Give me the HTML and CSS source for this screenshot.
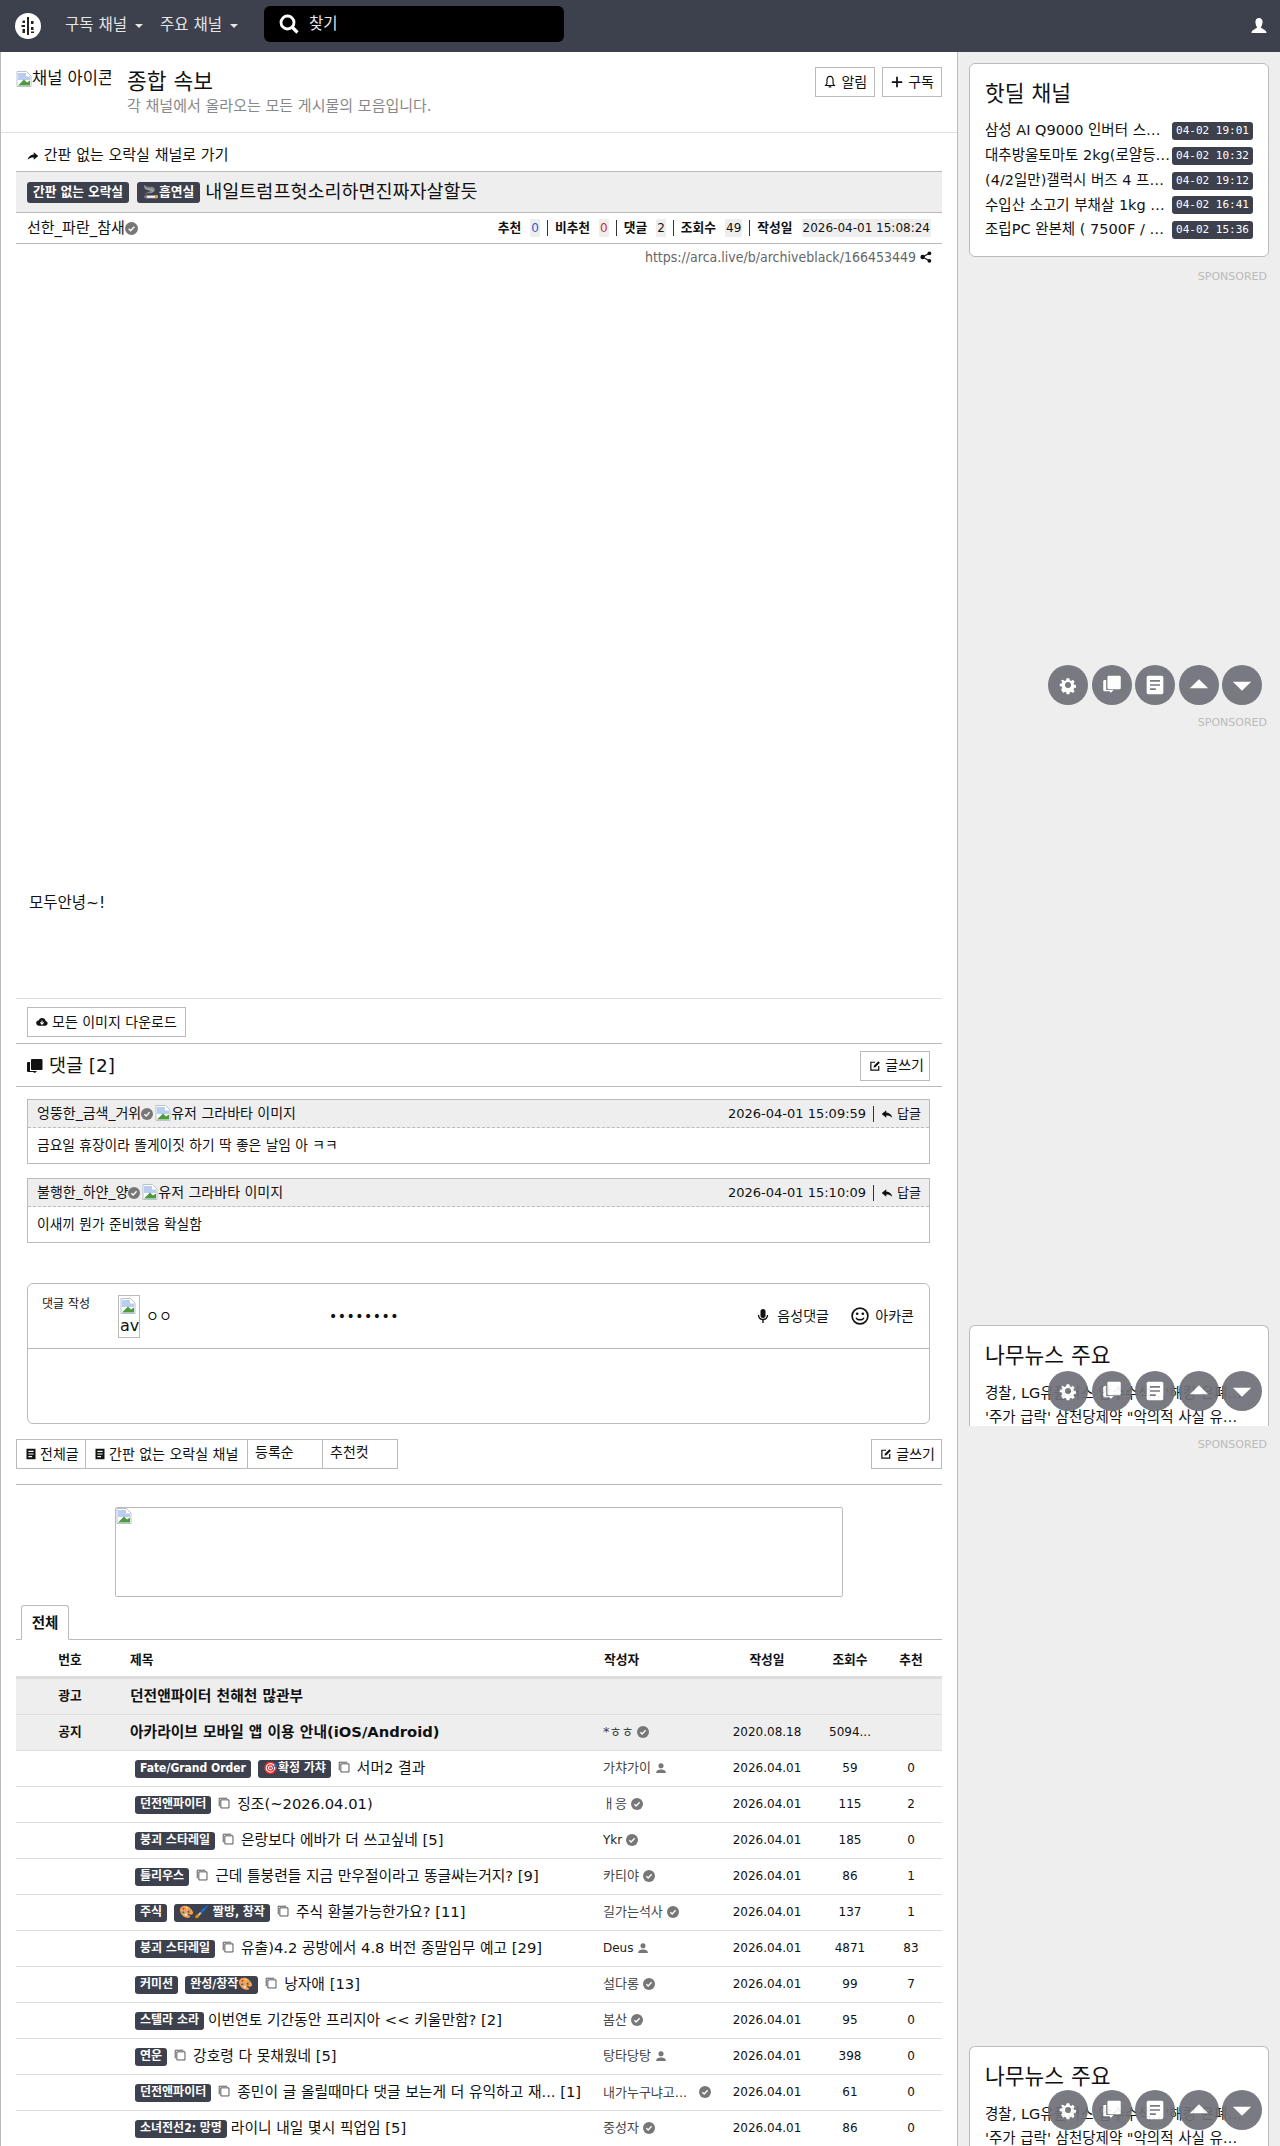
FILE: index.html
```html
<!DOCTYPE html>
<html lang="ko">
<head>
  <meta charset="UTF-8">
  <title>내일트럼프헛소리하면진짜자살할듯</title>
  <link rel="stylesheet" href="styles.css">
</head>
<body>
  <svg class="sprites" width="0" height="0">
    <symbol id="i-check" viewBox="0 0 16 16"><circle cx="8" cy="8" r="8" fill="#777"/><path d="M4.5 8.3l2.4 2.4 4.6-5" fill="none" stroke="#fff" stroke-width="1.8"/></symbol>
    <symbol id="i-person" viewBox="0 0 16 16"><circle cx="8" cy="5" r="3.4" fill="#777"/><path d="M1.5 14.5c0-3.4 3-4.6 6.500-4.600s6.500 1.200 6.500 4.600z" fill="#777"/></symbol>
    <symbol id="i-photos" viewBox="0 0 16 16"><path d="M3.500 3.500h10v10h-10z" fill="none" stroke="#333" stroke-width="1"/><path d="M1.500 11.500v-10h10" fill="none" stroke="#333" stroke-width="1"/></symbol>
    <symbol id="i-doc" viewBox="0 0 16 16"><path d="M2 1h12v14H2z" fill="#111"/><path d="M4.500 4.500h7M4.500 8h7M4.500 11.500h5" stroke="#fff" stroke-width="1.500"/></symbol>
    <symbol id="i-edit" viewBox="0 0 16 16"><path d="M8 3H2.500v10.500H13V8" fill="none" stroke="#111" stroke-width="1.600"/><path d="M6 10l.5-2.500L12.500 1.500l2 2-6 6z" fill="#111"/></symbol>
    <symbol id="i-reply" viewBox="0 0 16 16"><path d="M7 3L1 8l6 5V10c3.500 0 6 .8 8 3-.5-4-3.500-6.500-8-7z" fill="#111"/></symbol>
    <symbol id="i-broken" viewBox="0 0 16 16"><path d="M1 .5h9.500l4.500 4.500v10.500H1z" fill="#fff" stroke="#b9c3cf"/><path d="M2 2h8v3.500h4V9H2z" fill="#b8cdf0"/><path d="M2 14.500l6-6 3 3 3-2v5z" fill="#4a9c3f"/></symbol>
    <symbol id="f-gear" viewBox="0 0 24 24"><path d="M10 2h4l.6 3 2 .9 2.600-1.700 2.800 2.800-1.700 2.600.9 2 2.800.4v4l-2.800.6-.9 2 1.700 2.600-2.800 2.800-2.600-1.700-2 .9-.6 2.800h-4l-.6-2.800-2-.9-2.600 1.700L1.600 19l1.700-2.600-.9-2L-.4 14v-4l2.800-.4.9-2L1.600 5 4.400 4.200 7 5.900l2-.9z" transform="translate(2.400 2.400) scale(.8)" fill="#fff"/><circle cx="12" cy="12" r="3.600" fill="#6f7078"/></symbol>
    <symbol id="f-chat" viewBox="0 0 24 24"><path d="M8 1h13a1.500 1.500 0 0 1 1.500 1.500v13a1.500 1.500 0 0 1-1.500 1.500H8a1.500 1.500 0 0 1-1.500-1.500v-13A1.500 1.500 0 0 1 8 1z" fill="#fff"/><path d="M5 6v12h9l-3 3h-1l-1-1.500H3a1.500 1.500 0 0 1-1.500-1.500V7.500A1.500 1.500 0 0 1 3 6z" fill="#fff"/></symbol>
    <symbol id="f-doc" viewBox="0 0 24 24"><rect x="2" y="1" width="20" height="22" rx="2" fill="#fff"/><path d="M6 7h12M6 12h12M6 17h7" stroke="#6f7078" stroke-width="2"/></symbol>
    <symbol id="f-up" viewBox="0 0 24 24"><path d="M12 5l11 11H1z" fill="#fff"/></symbol>
    <symbol id="f-down" viewBox="0 0 24 24"><path d="M12 19L1 8h22z" fill="#fff"/></symbol>
  </svg>

  <nav class="navbar">
    <svg class="logo" viewBox="0 0 26 26"><circle cx="13" cy="13" r="13" fill="#fff"/><path d="M12 4h2v18h-2zM16 8h2.500v3H16zM16 14h2.500v3H16zM7.500 7.500H10v2.500H7.500zM6.500 12H10v2H6.500zM7.500 16H10v4H7.500zM19 20h-3v-1.500h3z" fill="#222"/></svg>
    <a class="nav-link">구독 채널<i class="caret"></i></a>
    <a class="nav-link">주요 채널<i class="caret"></i></a>
    <div class="search">
      <svg class="search-icon" viewBox="0 0 20 20"><circle cx="8.500" cy="8.500" r="6.500" fill="none" stroke="#fff" stroke-width="2.800"/><path d="M13 13l5.500 5.500" stroke="#fff" stroke-width="3.200"/></svg>
      <span>찾기</span>
    </div>
    <svg class="nav-user" viewBox="0 0 16 16"><path d="M8 0c2.400 0 3.600 1.800 3.600 4S10.500 8 10 9.500c0 1.200 5.500 2 5.500 5.500H.5c0-3.500 5.500-4.300 5.500-5.500C5.500 8 4.400 6.200 4.400 4S5.600 0 8 0z" fill="#fff"/></svg>
  </nav>

  <div class="wrap">
    <main class="content">
      <div class="channel-head">
        <span class="channel-icon"><svg class="broken-img"><use href="#i-broken"/></svg>채널 아이콘</span>
        <div class="channel-text">
          <h2>종합 속보</h2>
          <p>각 채널에서 올라오는 모든 게시물의 모음입니다.</p>
        </div>
        <div class="channel-btns">
          <a class="btn">
            <svg class="ico" viewBox="0 0 16 16"><path d="M8 1.500c-2.500 0-3.500 2-3.500 4.500v4L3 12h10l-1.500-2V6c0-2.500-1-4.500-3.500-4.500zM6.500 13.500h3" fill="none" stroke="#111" stroke-width="1.300"/></svg>
            알림</a>
          <a class="btn">
            <svg class="ico" viewBox="0 0 16 16"><path d="M8 2v12M2 8h12" stroke="#111" stroke-width="2"/></svg>
            구독</a>
        </div>
      </div>

      <a class="back-link">
        <svg class="ico-sm flip" viewBox="0 0 16 16"><use href="#i-reply"/></svg>
        간판 없는 오락실 채널로 가기</a>

      <div class="article-title">
        <span class="badge">간판 없는 오락실</span>
        <span class="badge">🚬흡연실</span>
        <span>내일트럼프헛소리하면진짜자살할듯</span>
      </div>
      <div class="article-info">
        <span class="author">선한_파란_참새<svg class="ico-sm"><use href="#i-check"/></svg></span>
        <div class="stats">
          <b>추천</b><span class="val blue">0</span><i></i>
          <b>비추천</b><span class="val red">0</span><i></i>
          <b>댓글</b><span class="val">2</span><i></i>
          <b>조회수</b><span class="val">49</span><i></i>
          <b>작성일</b><span class="val">2026-04-01 15:08:24</span>
        </div>
      </div>
      <div class="article-url">
        https://arca.live/b/archiveblack/166453449
        <svg class="ico-sm" viewBox="0 0 16 16"><circle cx="3.500" cy="8" r="3" fill="#111"/><circle cx="12.500" cy="3" r="2.500" fill="#111"/><circle cx="12.500" cy="13" r="2.500" fill="#111"/><path d="M3.500 8l9-5M3.500 8l9 5" stroke="#111" stroke-width="1.600"/></svg>
      </div>

      <div class="article-body">
        <div class="article-img"></div>
        <p>모두안녕~!</p>
      </div>

      <div class="download-row">
        <a class="btn">
          <svg class="ico-sm" viewBox="0 0 16 16"><path d="M4 13a3.500 3.500 0 0 1-.5-7A5 5 0 0 1 13 6.500 3.300 3.300 0 0 1 12.500 13z" fill="#111"/><path d="M8 6v4.500M5.800 8.500L8 11l2.200-2.500" fill="none" stroke="#fff" stroke-width="1.400"/></svg>
          모든 이미지 다운로드</a>
      </div>

      <div class="comment-head">
        <h3>
          <svg class="ico-chat" viewBox="0 0 16 16"><path d="M5 1h9.500a1 1 0 0 1 1 1v9a1 1 0 0 1-1 1H5a1 1 0 0 1-1-1V2a1 1 0 0 1 1-1z" fill="#111"/><path d="M3 4v9h7l-2 2-2-1H1a1 1 0 0 1-1-1V5a1 1 0 0 1 1-1z" fill="#111"/></svg>
          댓글 [2]</h3>
        <a class="btn">
          <svg class="ico-sm"><use href="#i-edit"/></svg>
          글쓰기</a>
      </div>

      <div class="comment">
        <div class="comment-top">
          <span class="comment-user">엉뚱한_금색_거위<svg class="ico-sm"><use href="#i-check"/></svg><svg class="broken-img"><use href="#i-broken"/></svg>유저 그라바타 이미지</span>
          <span class="comment-date">2026-04-01 15:09:59<i></i><svg class="ico-sm"><use href="#i-reply"/></svg>답글</span>
        </div>
        <div class="comment-text">금요일 휴장이라 똘게이짓 하기 딱 좋은 날임 아 ㅋㅋ</div>
      </div>
      <div class="comment">
        <div class="comment-top">
          <span class="comment-user">불행한_하얀_양<svg class="ico-sm"><use href="#i-check"/></svg><svg class="broken-img"><use href="#i-broken"/></svg>유저 그라바타 이미지</span>
          <span class="comment-date">2026-04-01 15:10:09<i></i><svg class="ico-sm"><use href="#i-reply"/></svg>답글</span>
        </div>
        <div class="comment-text">이새끼 뭔가 준비했음 확실함</div>
      </div>

      <form class="reply-form">
        <div class="reply-top">
          <span class="reply-label">댓글 작성</span>
          <span class="reply-avatar"><svg class="broken-img"><use href="#i-broken"/></svg>av</span>
          <span class="reply-nick">ㅇㅇ</span>
          <span class="reply-pass">••••••••</span>
          <a class="reply-tool">
            <svg class="ico" viewBox="0 0 16 16"><rect x="5.500" y="1" width="5" height="9" rx="2.500" fill="#111"/><path d="M3.500 7c0 3 2 4.500 4.500 4.500S12.500 10 12.500 7M8 11.500V15" fill="none" stroke="#111" stroke-width="1.400"/></svg>
            음성댓글</a>
          <a class="reply-tool">
            <svg class="ico-lg" viewBox="0 0 16 16"><circle cx="8" cy="8" r="7" fill="none" stroke="#111" stroke-width="1.500"/><circle cx="5.500" cy="6" r="1.200" fill="#111"/><circle cx="10.500" cy="6" r="1.200" fill="#111"/><path d="M4.500 9.500c1 2.500 6 2.500 7 0" fill="none" stroke="#111" stroke-width="1.300"/></svg>
            아카콘</a>
        </div>
        <div class="reply-area"></div>
      </form>

      <div class="list-tools">
        <div class="btn-group">
          <a class="btn btn-all"><svg class="ico-sm"><use href="#i-doc"/></svg>전체글</a>
          <a class="btn btn-channel"><svg class="ico-sm"><use href="#i-doc"/></svg>간판 없는 오락실 채널</a>
          <a class="btn btn-sel">등록순</a>
          <a class="btn btn-sel">추천컷</a>
        </div>
        <a class="btn">
          <svg class="ico-sm"><use href="#i-edit"/></svg>
          글쓰기</a>
      </div>

      <div class="banner"><svg class="broken-img"><use href="#i-broken"/></svg></div>

      <div class="tabs"><a class="tab">전체</a></div>

      <table class="list">
        <colgroup>
          <col class="c-no"><col class="c-title"><col class="c-author"><col class="c-date"><col class="c-view"><col class="c-rate">
        </colgroup>
        <thead>
          <tr><th>번호</th><th class="left">제목</th><th class="left">작성자</th><th>작성일</th><th>조회수</th><th>추천</th></tr>
        </thead>
        <tbody>
          <tr class="notice"><td><b>광고</b></td><td class="title"><b>던전앤파이터 천해천 많관부</b></td><td></td><td></td><td></td><td></td></tr>
          <tr class="notice"><td><b>공지</b></td><td class="title"><b>아카라이브 모바일 앱 이용 안내(iOS/Android)</b></td><td class="who">*ㅎㅎ<svg class="ico-sm"><use href="#i-check"/></svg></td><td>2020.08.18</td><td>5094...</td><td></td></tr>
          <tr><td></td><td class="title"><span class="badge">Fate/Grand Order</span><span class="badge">🎯확정 가챠</span><svg class="ico-ph"><use href="#i-photos"/></svg>서머2 결과</td><td class="who">가챠가이<svg class="ico-sm"><use href="#i-person"/></svg></td><td>2026.04.01</td><td>59</td><td>0</td></tr>
          <tr><td></td><td class="title"><span class="badge">던전앤파이터</span><svg class="ico-ph"><use href="#i-photos"/></svg>징조(~2026.04.01)</td><td class="who">ㅐ응<svg class="ico-sm"><use href="#i-check"/></svg></td><td>2026.04.01</td><td>115</td><td>2</td></tr>
          <tr><td></td><td class="title"><span class="badge">붕괴 스타레일</span><svg class="ico-ph"><use href="#i-photos"/></svg>은랑보다 에바가 더 쓰고싶네 [5]</td><td class="who latin">Ykr<svg class="ico-sm"><use href="#i-check"/></svg></td><td>2026.04.01</td><td>185</td><td>0</td></tr>
          <tr><td></td><td class="title"><span class="badge">틀리우스</span><svg class="ico-ph"><use href="#i-photos"/></svg>근데 틀붕련들 지금 만우절이라고 똥글싸는거지? [9]</td><td class="who">카티야<svg class="ico-sm"><use href="#i-check"/></svg></td><td>2026.04.01</td><td>86</td><td>1</td></tr>
          <tr><td></td><td class="title"><span class="badge">주식</span><span class="badge">🎨🖌️ 짤방, 창작</span><svg class="ico-ph"><use href="#i-photos"/></svg>주식 환불가능한가요? [11]</td><td class="who">길가는석사<svg class="ico-sm"><use href="#i-check"/></svg></td><td>2026.04.01</td><td>137</td><td>1</td></tr>
          <tr><td></td><td class="title"><span class="badge">붕괴 스타레일</span><svg class="ico-ph"><use href="#i-photos"/></svg>유출)4.2 공방에서 4.8 버전 종말임무 예고 [29]</td><td class="who latin">Deus<svg class="ico-sm"><use href="#i-person"/></svg></td><td>2026.04.01</td><td>4871</td><td>83</td></tr>
          <tr><td></td><td class="title"><span class="badge">커미션</span><span class="badge">완성/창작🎨</span><svg class="ico-ph"><use href="#i-photos"/></svg>낭자애 [13]</td><td class="who">설다롱<svg class="ico-sm"><use href="#i-check"/></svg></td><td>2026.04.01</td><td>99</td><td>7</td></tr>
          <tr><td></td><td class="title"><span class="badge tight">스텔라 소라</span>이번연토 기간동안 프리지아 &lt;&lt; 키울만함? [2]</td><td class="who">봄산<svg class="ico-sm"><use href="#i-check"/></svg></td><td>2026.04.01</td><td>95</td><td>0</td></tr>
          <tr><td></td><td class="title"><span class="badge">연운</span><svg class="ico-ph"><use href="#i-photos"/></svg>강호령 다 못채웠네 [5]</td><td class="who">탕타당탕<svg class="ico-sm"><use href="#i-person"/></svg></td><td>2026.04.01</td><td>398</td><td>0</td></tr>
          <tr><td></td><td class="title"><span class="badge">던전앤파이터</span><svg class="ico-ph"><use href="#i-photos"/></svg>종민이 글 올릴때마다 댓글 보는게 더 유익하고 재... [1]</td><td class="who"><span class="who-cut">내가누구냐고...</span><svg class="ico-sm"><use href="#i-check"/></svg></td><td>2026.04.01</td><td>61</td><td>0</td></tr>
          <tr><td></td><td class="title"><span class="badge tight">소녀전선2: 망명</span>라이니 내일 몇시 픽업임 [5]</td><td class="who">중성자<svg class="ico-sm"><use href="#i-check"/></svg></td><td>2026.04.01</td><td>86</td><td>0</td></tr>
        </tbody>
      </table>
    </main>

    <aside class="sidebar">
      <div class="card">
        <h5>핫딜 채널</h5>
        <ul class="deals">
          <li><span>삼성 AI Q9000 인버터 스탠드 에어컨 특가</span><time>04-02 19:01</time></li>
          <li><span>대추방울토마토 2kg(로얄등급) 무료배송 특가</span><time>04-02 10:32</time></li>
          <li><span>(4/2일만)갤럭시 버즈 4 프로 사전예약 혜택</span><time>04-02 19:12</time></li>
          <li><span>수입산 소고기 부채살 1kg 할인 특가 판매</span><time>04-02 16:41</time></li>
          <li><span>조립PC 완본체 ( 7500F / 9060 XT 16GB )</span><time>04-02 15:36</time></li>
        </ul>
      </div>
      <div class="sponsored first">SPONSORED</div>
      <div class="ad-slot tall"></div>
      <div class="sponsored">SPONSORED</div>
      <div class="ad-slot taller"></div>
      <div class="card news">
        <h5>나무뉴스 주요</h5>
        <p>경찰, LG유플러스 압수수색...'해킹 은폐 의혹' 수사 확대</p>
        <p>'주가 급락' 삼천당제약 "악의적 사실 유포에 법적 대응"</p>
      </div>
      <div class="sponsored">SPONSORED</div>
      <div class="ad-slot tallest"></div>
      <div class="card news">
        <h5>나무뉴스 주요</h5>
        <p>경찰, LG유플러스 압수수색...'해킹 은폐 의혹' 수사 확대</p>
        <p>'주가 급락' 삼천당제약 "악의적 사실 유포에 법적 대응"</p>
      </div>
    </aside>

    <div class="float-btns at-1">
      <a><svg><use href="#f-gear"/></svg></a><a><svg><use href="#f-chat"/></svg></a><a><svg><use href="#f-doc"/></svg></a><a><svg><use href="#f-up"/></svg></a><a><svg><use href="#f-down"/></svg></a>
    </div>
    <div class="float-btns at-2">
      <a><svg><use href="#f-gear"/></svg></a><a><svg><use href="#f-chat"/></svg></a><a><svg><use href="#f-doc"/></svg></a><a><svg><use href="#f-up"/></svg></a><a><svg><use href="#f-down"/></svg></a>
    </div>
    <div class="float-btns at-3">
      <a><svg><use href="#f-gear"/></svg></a><a><svg><use href="#f-chat"/></svg></a><a><svg><use href="#f-doc"/></svg></a><a><svg><use href="#f-up"/></svg></a><a><svg><use href="#f-down"/></svg></a>
    </div>
  </div>
</body>
</html>
```

FILE: styles.css
```css
html, body {
  margin: 0;
  padding: 0;
  height: 2146px;
  overflow: hidden;
}
body {
  font-family: "DejaVu Sans", "Noto Sans CJK KR", sans-serif;
  font-size: 14px;
  line-height: 1.5;
  color: #111;
  background: #eee;
}
a {
  color: inherit;
  text-decoration: none;
}
h2, h3, h5, p, ul {
  margin: 0;
  padding: 0;
  font-weight: normal;
}
.sprites {
  position: absolute;
}

/* navbar */
.navbar {
  position: relative;
  display: flex;
  align-items: center;
  height: 52px;
  background: #3d414d;
  color: #e6e6e6;
}
.logo {
  width: 26px;
  height: 26px;
  margin-left: 15px;
  margin-right: 24px;
}
.nav-link {
  display: flex;
  align-items: center;
  margin-right: 17px;
  font-size: 15.500px;
}
.caret {
  width: 0;
  height: 0;
  margin-left: 8px;
  border-top: 4px solid #e6e6e6;
  border-left: 4px solid transparent;
  border-right: 4px solid transparent;
}
.search {
  position: absolute;
  left: 264px;
  top: 6px;
  display: flex;
  align-items: center;
  width: 300px;
  height: 36px;
  border-radius: 6px;
  background: #000;
  font-size: 15.500px;
}
.search span {
  padding-top: 2px;
}
.search-icon {
  width: 20px;
  height: 20px;
  margin-left: 15px;
  margin-right: 10px;
}
.nav-user {
  width: 16px;
  height: 16px;
  margin-left: auto;
  margin-right: 13px;
}

/* layout */
.wrap {
  position: relative;
  display: flex;
  height: 2094px;
  overflow: hidden;
}
.content {
  box-sizing: border-box;
  width: 958px;
  flex: none;
  padding: 0 15px;
  border-left: 1px solid #bbb;
  border-right: 1px solid #bbb;
  background: #fff;
}
.sidebar {
  flex: 1;
  min-width: 0;
  padding: 11px 11px 0;
}

/* shared bits */
.ico, .ico-sm, .ico-lg, .ico-chat {
  flex: none;
  vertical-align: -2px;
}
.ico { width: 14px; height: 14px; }
.ico-sm { width: 12px; height: 12px; }
.ico-lg { width: 18px; height: 18px; margin-right: 2px; vertical-align: -4px; }
.ico-chat { width: 16px; height: 16px; }
.flip { transform: scaleX(-1); }
.broken-img {
  width: 16px;
  height: 16px;
  flex: none;
  vertical-align: -3px;
}
.btn {
  display: inline-flex;
  align-items: center;
  gap: 4px;
  box-sizing: border-box;
  height: 30px;
  padding: 0 8px;
  border: 1px solid #bbb;
  background: #fff;
  font-size: 14px;
  white-space: nowrap;
}
.badge {
  display: inline-block;
  margin-right: 7px;
  padding: 0 5px;
  height: 18px;
  border-radius: 3px;
  background: #3d414d;
  color: #fff;
  font-size: 12px;
  font-stretch: condensed;
  font-weight: bold;
  line-height: 17px;
  vertical-align: 1px;
}
.badge.tight { margin-right: 4px; }

/* channel head */
.channel-head {
  display: flex;
  height: 81px;
  margin: 0 -15px;
  padding: 0 15px;
  border-bottom: 1px solid #ddd;
  box-sizing: border-box;
}
.channel-icon {
  width: 95px;
  flex: none;
  height: 24px;
  margin-top: 15px;
  margin-right: 16px;
  overflow: hidden;
  font-size: 16.500px;
  white-space: nowrap;
}
.channel-text {
  flex: 1;
  padding-top: 16px;
}
.channel-text h2 {
  font-size: 21.500px;
  line-height: 27px;
}
.channel-text p {
  font-size: 15px;
  line-height: 22px;
  color: #888;
}
.channel-btns {
  display: flex;
  gap: 7px;
  padding-top: 15px;
}
.channel-btns .btn {
  padding: 0 7px;
}
.back-link {
  display: block;
  margin: 12px 0 0 11px;
  height: 26px;
  font-size: 15px;
  line-height: 20px;
}

/* article */
.article-title {
  display: flex;
  align-items: center;
  box-sizing: border-box;
  height: 42px;
  padding: 0 11px;
  border-top: 1px solid #bbb;
  border-bottom: 1px solid #bbb;
  background: #eee;
  font-size: 18.500px;
}
.article-title .badge {
  height: 21px;
  font-size: 12.750px;
  line-height: 20px;
  margin-right: 8px;
  padding: 0 6px;
}
.article-title .badge + .badge { margin-right: 5px; }
.article-info {
  display: flex;
  align-items: center;
  justify-content: space-between;
  box-sizing: border-box;
  height: 31px;
  padding: 0 11px;
  border-bottom: 1px solid #bbb;
  font-size: 15px;
}
.author .ico-sm { width: 13px; height: 13px; }
.stats {
  display: flex;
  align-items: center;
  font-size: 12px;
}
.stats b {
  margin-right: 9px;
  font-size: 12.750px;
}
.stats i, .comment-date i {
  width: 1px;
  height: 16px;
  margin: 0 7px;
  background: #333;
}
.val {
  padding: 0 1px;
  background: #eee;
}
.val.blue { color: #2d5fd0; }
.val.red { color: #c9302c; }
.article-url {
  height: 26px;
  padding-right: 10px;
  font-size: 14px;
  font-stretch: condensed;
  line-height: 26px;
  color: #666;
  text-align: right;
}
.article-url .ico-sm { vertical-align: -1px; }
.article-img { height: 623px; }
.article-body {
  height: 729px;
  padding-left: 13px;
  border-bottom: 1px solid #ddd;
  box-sizing: border-box;
}
.article-body p {
  font-size: 15.500px;
  line-height: 21px;
}
.download-row {
  height: 45px;
  padding: 8px 11px 0;
  box-sizing: border-box;
  border-bottom: 1px solid #bbb;
}

/* comments */
.comment-head {
  display: flex;
  align-items: center;
  justify-content: space-between;
  box-sizing: border-box;
  height: 43px;
  padding: 0 12px 0 11px;
  border-bottom: 1px solid #bbb;
  margin-bottom: 12px;
}
.comment-head h3 {
  padding-top: 1px;
  font-size: 18.500px;
}
.comment-head .btn {
  margin-top: 1px;
  padding: 0 5px 0 8px;
}
.comment {
  box-sizing: border-box;
  height: 65px;
  margin: 0 12px 14px 11px;
  border: 1px solid #bbb;
  font-size: 13px;
}
.comment-top {
  display: flex;
  align-items: center;
  justify-content: space-between;
  height: 27px;
  padding: 0 8px 0 9px;
  border-bottom: 1px dashed #bbb;
  background: #eee;
}
.comment-user {
  font-size: 14px;
  white-space: nowrap;
}
.comment-user .ico-sm { margin-right: 2px; }
.comment-date {
  display: flex;
  align-items: center;
}
.comment-date .ico-sm { margin-right: 4px; }
.comment-text {
  padding: 7px 9px;
  font-size: 13.750px;
}

/* reply form */
.reply-form {
  box-sizing: border-box;
  height: 141px;
  margin: 40px 12px 15px 11px;
  border: 1px solid #bbb;
  border-radius: 6px;
}
.reply-top {
  position: relative;
  display: flex;
  align-items: center;
  height: 64px;
  border-bottom: 1px solid #bbb;
  font-size: 13px;
}
.reply-label {
  width: 90px;
  padding-left: 14px;
  margin-top: -24px;
  box-sizing: border-box;
  font-size: 12px;
}
.reply-avatar {
  box-sizing: border-box;
  width: 22px;
  height: 43px;
  border: 1px solid #bbb;
  overflow: hidden;
  padding-left: 1px;
  font-size: 16px;
  line-height: 20px;
}
.reply-nick {
  width: 189px;
  padding-left: 6px;
  box-sizing: border-box;
  font-size: 14px;
}
.reply-pass {
  flex: 1;
  font-size: 14px;
  letter-spacing: .5px;
}
.reply-tool {
  margin-right: 22px;
  font-size: 14px;
}
.reply-tool .ico {
  width: 16px;
  height: 16px;
  margin-right: 2px;
  vertical-align: -3px;
}
.reply-tool + .reply-tool { margin-right: 15px; }
.list-tools {
  display: flex;
  justify-content: space-between;
  height: 45px;
  border-bottom: 1px solid #bbb;
}
.btn-group {
  display: flex;
  height: 30px;
}
.btn-group .btn {
  padding: 0 7px;
  gap: 3px;
}
.btn-group .btn + .btn { margin-left: -1px; }
.btn-group .btn-all {
  width: 70px;
  padding-left: 8px;
}
.btn-group .btn-channel {
  width: 163px;
  padding-left: 8px;
}
.btn-group .btn-sel {
  align-items: flex-start;
  width: 76px;
  line-height: 24px;
}
.list-tools > .btn {
  padding: 0 6px 0 8px;
}
.banner {
  box-sizing: border-box;
  width: 728px;
  height: 90px;
  margin: 22px 0 0 99px;
  border: 1px solid #bbb;
  border-radius: 2px;
  line-height: 1;
}

/* list */
.tabs {
  height: 43px;
  padding: 8px 0 0 5px;
  box-sizing: border-box;
  border-bottom: 1px solid #bbb;
}
.tab {
  display: block;
  box-sizing: border-box;
  width: 48px;
  height: 35px;
  border: 1px solid #bbb;
  border-bottom: 1px solid #fff;
  border-radius: 3px 3px 0 0;
  background: #fff;
  font-size: 14.500px;
  font-weight: bold;
  line-height: 34px;
  text-align: center;
}
.list {
  width: 926px;
  border-collapse: collapse;
  table-layout: fixed;
  font-size: 12px;
}
.c-no { width: 108px; }
.c-title { width: 474px; }
.c-author { width: 116px; }
.c-date { width: 106px; }
.c-view { width: 60px; }
.c-rate { width: 62px; }
.list th {
  height: 37px;
  padding: 4px 0 0;
  box-sizing: border-box;
  border-bottom: 3px solid #ddd;
  font-size: 12.750px;
}
.list th.left {
  padding-left: 6px;
  text-align: left;
}
.list td {
  height: 35px;
  padding: 0;
  border-bottom: 1px solid #ddd;
  text-align: center;
  white-space: nowrap;
  overflow: hidden;
}
.list td:first-child b { font-size: 12.750px; }
.list .title {
  padding-left: 11px;
  font-size: 14.750px;
  text-align: left;
}
.list .notice td { background: #eee; }
.list .notice .title {
  padding-left: 6px;
}
.list .who {
  padding-left: 5px;
  font-size: 13px;
  color: #444;
  text-align: left;
}
.list .latin {
  font-size: 12px;
  color: #222;
}
.who .ico-sm {
  margin-left: 4px;
  vertical-align: -2px;
}
.who-cut {
  display: inline-block;
  width: 92px;
  overflow: hidden;
  vertical-align: middle;
}
.ico-ph {
  width: 13px;
  height: 13px;
  margin: 0 6px 0 0;
  vertical-align: -1px;
}

/* sidebar */
.card {
  box-sizing: border-box;
  padding: 16px 15px 14px 15px;
  border: 1px solid #bbb;
  border-radius: 6px;
  background: #fff;
}
.card h5 {
  font-size: 21.500px;
  line-height: 28px;
  margin-bottom: 11px;
}
.deals {
  list-style: none;
}
.deals li {
  display: flex;
  align-items: center;
  justify-content: space-between;
  height: 24.700px;
  font-size: 14.500px;
}
.deals span {
  flex: 1;
  min-width: 0;
  margin-right: 1px;
  overflow: hidden;
  text-overflow: ellipsis;
  white-space: nowrap;
}
.deals time {
  flex: none;
  width: 81px;
  height: 18px;
  border-radius: 3px;
  background: #3d414d;
  color: #fff;
  font-family: "DejaVu Sans Mono", monospace;
  font-size: 11px;
  line-height: 18px;
  text-align: center;
}
.news {
  height: 101px;
  padding-right: 22px;
  overflow: hidden;
  border-bottom: 0;
  border-radius: 6px 6px 0 0;
}
.news + .sponsored { margin-top: 9px; }
.news p {
  font-size: 14.500px;
  line-height: 24px;
  overflow: hidden;
  text-overflow: ellipsis;
  white-space: nowrap;
}
.sponsored {
  height: 20px;
  padding-right: 2px;
  font-size: 11px;
  line-height: 20px;
  color: #bbb;
  text-align: right;
}
.first { margin-top: 10px; }
.ad-slot.tall { height: 426px; }
.ad-slot.taller { height: 592px; }
.ad-slot.tallest { height: 591px; }

/* floating buttons lie over the sidebar */
.float-btns {
  position: absolute;
  left: 1048px;
  display: flex;
  gap: 3.500px;
}
.at-1 { top: 613px; }
.at-2 { top: 1319px; }
.at-3 { top: 2038px; }
.float-btns a {
  display: flex;
  align-items: center;
  justify-content: center;
  width: 40px;
  height: 40px;
  border-radius: 50%;
  background: #6f7078;
  opacity: .92;
}
.float-btns svg {
  width: 20px;
  height: 20px;
}
```
